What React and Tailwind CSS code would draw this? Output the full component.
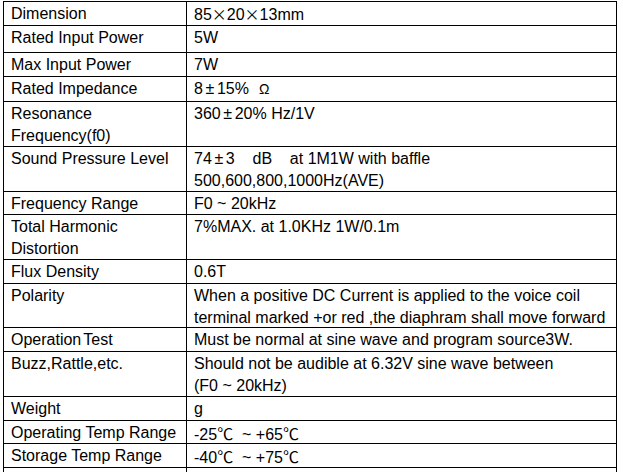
const CJK = 'font-["Noto_Sans_CJK_SC",sans-serif]'

const X = () => (
  <span className={`inline-block w-[15px] text-center text-[15px] ${CJK}`}>×</span>
)
const PM = () => <span className="inline-block w-[14px] text-center">±</span>
const C = () => <span className={CJK}>℃</span>

const rows = [
  { h: 'h-[24px]', label: 'Dimension', value: <>85<X />20<X />13mm</> },
  { h: 'h-[27px]', label: 'Rated Input Power', value: '5W' },
  { h: 'h-[24px]', label: 'Max Input Power', value: '7W' },
  {
    h: 'h-[25px]',
    label: 'Rated Impedance',
    value: (
      <>
        8<PM />15%<span className="ml-[10px] text-[14px]">Ω</span>
      </>
    ),
  },
  {
    h: 'h-[45px]',
    label: (
      <>
        Resonance
        <br />
        Frequency(f0)
      </>
    ),
    value: <>360<PM />20% Hz/1V</>,
  },
  {
    h: 'h-[45px]',
    label: 'Sound Pressure Level',
    value: (
      <>
        74<PM />3{'    '}dB{'    '}at 1M1W with baffle
        <br />
        500,600,800,1000Hz(AVE)
      </>
    ),
  },
  { h: 'h-[23px]', label: 'Frequency Range', value: 'F0 ~ 20kHz' },
  {
    h: 'h-[45px]',
    label: (
      <>
        Total Harmonic
        <br />
        Distortion
      </>
    ),
    value: '7%MAX. at 1.0KHz 1W/0.1m',
  },
  { h: 'h-[24px]', label: 'Flux Density', value: '0.6T' },
  {
    h: 'h-[44px]',
    label: 'Polarity',
    value: (
      <>
        When a positive DC Current is applied to the voice coil
        <br />
        terminal marked +or red ,the diaphram shall move forward
      </>
    ),
  },
  {
    h: 'h-[24px]',
    label: (
      <>
        Operation<span className="ml-[2px]">Test</span>
      </>
    ),
    value: 'Must be normal at sine wave and program source3W.',
  },
  {
    h: 'h-[45px]',
    label: 'Buzz,Rattle,etc.',
    value: (
      <>
        Should not be audible at 6.32V sine wave between
        <br />
        (F0 ~ 20kHz)
      </>
    ),
  },
  { h: 'h-[24px]', label: 'Weight', value: 'g' },
  {
    h: 'h-[23px]',
    label: 'Operating Temp Range',
    value: <>-25<C />{'  '}~ +65<C /></>,
  },
  {
    h: 'h-[24px]',
    label: 'Storage Temp Range',
    value: <>-40<C />{'  '}~ +75<C /></>,
  },
  { h: 'h-[24px]', label: '', value: '' },
]

export default function App() {
  return (
    <div className="min-h-[472px] w-[623px] overflow-hidden bg-white pt-[1px] pl-[3px] font-['Liberation_Sans',Arial,sans-serif] text-[16px] leading-[22px] text-black">
      <div className="w-[614px] border-t border-l border-black">
        {rows.map((row, i) => (
          <div key={i} className={`flex border-b border-black ${row.h}`}>
            <div className="w-[183px] shrink-0 whitespace-pre border-r border-black pt-[1px] pl-[7px]">
              {row.label}
            </div>
            <div className="flex-1 whitespace-pre border-r border-black pt-[1px] pl-[7px]">
              {row.value}
            </div>
          </div>
        ))}
      </div>
    </div>
  )
}
